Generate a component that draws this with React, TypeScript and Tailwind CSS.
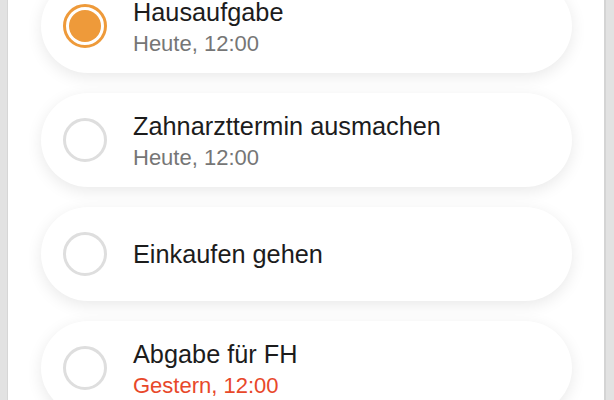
const tasks = [
  { title: "Hausaufgabe", due: "Heute, 12:00", done: true, overdue: false },
  { title: "Zahnarzttermin ausmachen", due: "Heute, 12:00", done: false, overdue: false },
  { title: "Einkaufen gehen", due: "", done: false, overdue: false },
  { title: "Abgabe für FH", due: "Gestern, 12:00", done: false, overdue: true },
];

function Check({ done }: { done: boolean }) {
  if (done) {
    return (
      <div className="w-[44px] h-[44px] rounded-full border-[3px] border-[#ee9a3a] p-[3px] shrink-0">
        <div className="w-full h-full rounded-full bg-[#ee9a3a]" />
      </div>
    );
  }
  return <div className="w-[44px] h-[44px] rounded-full border-[3px] border-[#dedede] shrink-0" />;
}

export default function App() {
  return (
    <div
      className="w-[614px] h-[400px] overflow-hidden flex bg-[#e2e2e2]"
      style={{ fontFamily: "'Liberation Sans', Arial, sans-serif" }}
    >
      <div className="w-[8px] bg-[#e2e2e2] border-r border-[#d6d6d6]" />
      <div className="flex-1 bg-white border-r-2 border-[#d4d4d4]">
        <div className="-mt-[21px] pl-[33px] pr-[32px] flex flex-col gap-[20px]">
          {tasks.map((t) => (
            <div
              key={t.title}
              className="h-[94px] rounded-full bg-white flex items-center gap-[26px] pl-[22px] shadow-[0_4px_16px_rgba(0,0,0,0.09)]"
            >
              <Check done={t.done} />
              <div className={"flex flex-col " + (t.due ? "pt-[2px]" : "")}>
                <span className="text-[25.3px] leading-[28px] text-[#1c1c1c]">{t.title}</span>
                {t.due && (
                  <span
                    className={
                      "text-[22px] leading-[26px] mt-[5px] " +
                      (t.overdue ? "text-[#e8482a]" : "text-[#767676]")
                    }
                  >
                    {t.due}
                  </span>
                )}
              </div>
            </div>
          ))}
        </div>
      </div>
      <div className="w-[8px] bg-[#e2e2e2]" />
    </div>
  );
}
